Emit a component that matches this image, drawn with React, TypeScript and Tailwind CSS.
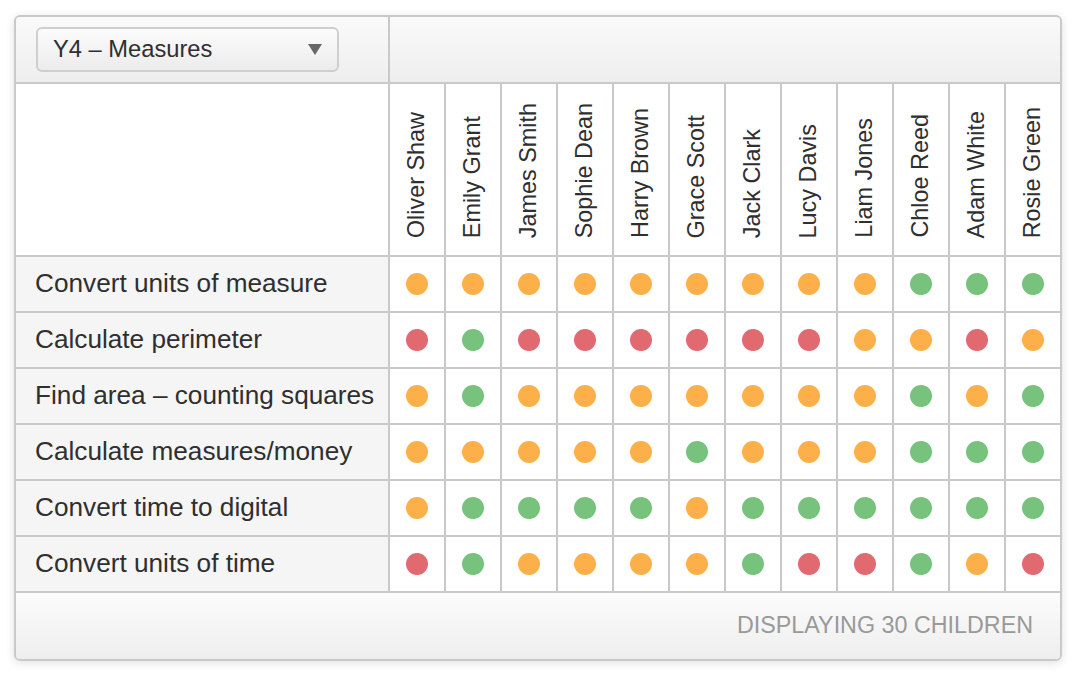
import React from "react";

const names = [
  "Oliver Shaw",
  "Emily Grant",
  "James Smith",
  "Sophie Dean",
  "Harry Brown",
  "Grace Scott",
  "Jack Clark",
  "Lucy Davis",
  "Liam Jones",
  "Chloe Reed",
  "Adam White",
  "Rosie Green",
];

const rows: { label: string; marks: string }[] = [
  { label: "Convert units of measure", marks: "OOOOOOOOOGGG" },
  { label: "Calculate perimeter", marks: "RGRRRRRROORO" },
  { label: "Find area – counting squares", marks: "OGOOOOOOOGOG" },
  { label: "Calculate measures/money", marks: "OOOOOGOOOGGG" },
  { label: "Convert time to digital", marks: "OGGGGOGGGGGG" },
  { label: "Convert units of time", marks: "RGOOOOGRRGOR" },
];

function Dot({ m }: { m: string }) {
  const cls =
    m === "G" ? "bg-[#77c27c]" : m === "R" ? "bg-[#e06a70]" : "bg-[#fdaf4a]";
  return <span className={`block w-[22px] h-[22px] rounded-full ${cls}`} />;
}

export default function App() {
  return (
    <div
      className="w-[1076px] h-[674px] bg-white pt-[15px] pl-[14px]"
      style={{ fontFamily: '"Liberation Sans", Arial, sans-serif' }}
    >
      <div className="w-[1048px] border-2 border-[#c9c9c9] rounded-[6px] overflow-hidden shadow-[0_2px_10px_rgba(0,0,0,0.12)]">
        <div className="grid grid-cols-[372px_repeat(12,54px)] grid-rows-[65px_171px_repeat(6,54px)_66px] gap-[2px] bg-[#c9c9c9]">
          {/* header */}
          <div className="bg-gradient-to-b from-[#fafafa] to-[#eeeeee] flex items-center pl-[20px]">
            <div className="w-[303px] h-[45px] rounded-[6px] border-2 border-[#cfcfcf] bg-gradient-to-b from-[#fbfbfb] to-[#ececec] flex items-center justify-between pl-[15px] pr-[15px]">
              <span className="text-[23.7px] text-[#2f2f2f] leading-none">
                Y4 – Measures
              </span>
              <svg width="14" height="11" viewBox="0 0 14 11">
                <polygon points="0,0 14,0 7,11" fill="#6a6666" />
              </svg>
            </div>
          </div>
          <div className="col-span-12 bg-gradient-to-b from-[#fafafa] to-[#eeeeee]" />

          {/* names */}
          <div className="bg-white" />
          {names.map((n) => (
            <div key={n} className="bg-white flex items-end justify-center pb-[17px]">
              <span
                className="text-[23.4px] text-[#2f2f2f] leading-none whitespace-nowrap"
                style={{ writingMode: "vertical-rl", transform: "rotate(180deg)" }}
              >
                {n}
              </span>
            </div>
          ))}

          {/* rows */}
          {rows.map((r) => (
            <React.Fragment key={r.label}>
              <div className="bg-[#f5f5f5] flex items-center pl-[19px] text-[26.2px] text-[#2f2f2f] whitespace-nowrap">
                {r.label}
              </div>
              {r.marks.split("").map((m, i) => (
                <div key={i} className="bg-white flex items-center justify-center">
                  <Dot m={m} />
                </div>
              ))}
            </React.Fragment>
          ))}

          {/* footer */}
          <div className="col-span-13 bg-gradient-to-b from-[#fcfcfc] to-[#eeeeee] flex items-center justify-end pr-[27px]">
            <span className="text-[23.3px] text-[#999] leading-none">
              DISPLAYING 30 CHILDREN
            </span>
          </div>
        </div>
      </div>
    </div>
  );
}
